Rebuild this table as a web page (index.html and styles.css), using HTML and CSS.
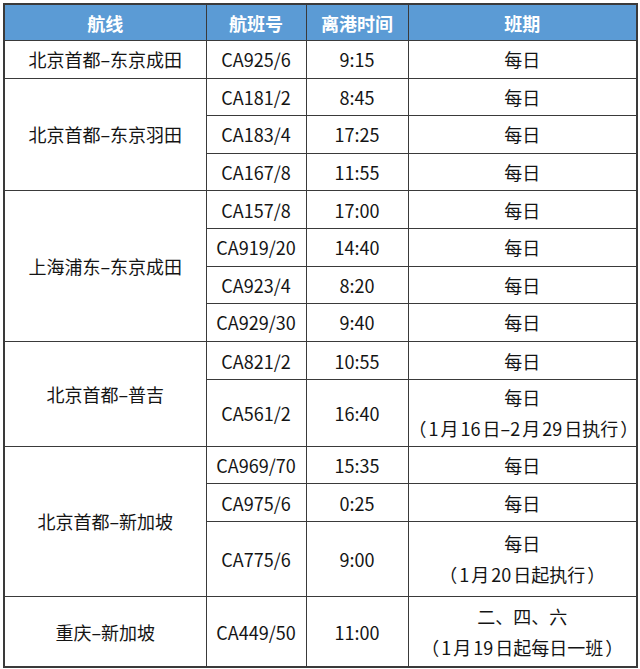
FILE: index.html
```html
<!DOCTYPE html>
<html lang="zh">
<head>
<meta charset="utf-8">
<link rel="stylesheet" href="styles.css">
</head>
<body>
<table class="sched">
  <colgroup>
    <col class="c1"><col class="c2"><col class="c3"><col class="c4">
  </colgroup>
  <thead>
    <tr class="head"><th>航线</th><th>航班号</th><th>离港时间</th><th>班期</th></tr>
  </thead>
  <tbody>
    <tr class="r"><td>北京首都–东京成田</td><td>CA925/6</td><td>9:15</td><td>每日</td></tr>
    <tr class="r"><td rowspan="3">北京首都–东京羽田</td><td>CA181/2</td><td>8:45</td><td>每日</td></tr>
    <tr class="r"><td>CA183/4</td><td>17:25</td><td>每日</td></tr>
    <tr class="r"><td>CA167/8</td><td>11:55</td><td>每日</td></tr>
    <tr class="r"><td rowspan="4">上海浦东–东京成田</td><td>CA157/8</td><td>17:00</td><td>每日</td></tr>
    <tr class="r"><td>CA919/20</td><td>14:40</td><td>每日</td></tr>
    <tr class="r"><td>CA923/4</td><td>8:20</td><td>每日</td></tr>
    <tr class="r"><td>CA929/30</td><td>9:40</td><td>每日</td></tr>
    <tr class="r r9"><td rowspan="2">北京首都–普吉</td><td>CA821/2</td><td>10:55</td><td>每日</td></tr>
    <tr class="d1"><td>CA561/2</td><td>16:40</td><td class="two">每日<br><span class="note">（ 1 月 16 日–2 月 29 日执行 ）</span></td></tr>
    <tr class="r"><td rowspan="3">北京首都–新加坡</td><td>CA969/70</td><td>15:35</td><td>每日</td></tr>
    <tr class="r"><td>CA975/6</td><td>0:25</td><td>每日</td></tr>
    <tr class="d2"><td>CA775/6</td><td>9:00</td><td class="two">每日<br><span class="note">（ 1 月 20 日起执行 ）</span></td></tr>
    <tr class="d3"><td>重庆–新加坡</td><td>CA449/50</td><td>11:00</td><td class="two">二、四、六<br><span class="note">（ 1 月 19 日起每日一班 ）</span></td></tr>
  </tbody>
</table>
</body>
</html>
```

FILE: styles.css
```css
html, body {
  margin: 0;
  padding: 0;
  background: #ffffff;
}
body {
  padding: 3px 0 0 3px;
  font-family: "Noto Sans CJK SC", "Noto Sans", sans-serif;
  color: #141414;
}
.sched {
  border-collapse: collapse;
  table-layout: fixed;
  width: 633px;
  border: 2px solid #3a3a3a;
}
.c1 { width: 202px; }
.c2 { width: 100px; }
.c3 { width: 102px; }
.c4 { width: 229px; }
.sched th,
.sched td {
  border: 1px solid #3a3a3a;
  padding: 0;
  text-align: center;
  vertical-align: middle;
  font-size: 18px;
  line-height: 22px;
  white-space: nowrap;
  overflow: visible;
}
.head th {
  background: #5b9bd5;
  color: #ffffff;
  font-weight: 700;
  height: 35px;
}
.r { height: 37.6px; }
.r9 { height: 38.5px; }
.d1 { height: 66.5px; }
.d2 { height: 75px; }
.d3 { height: 71px; }
.sched td.two {
  line-height: 31px;
}
.note {
  word-spacing: -2px;
}
```
